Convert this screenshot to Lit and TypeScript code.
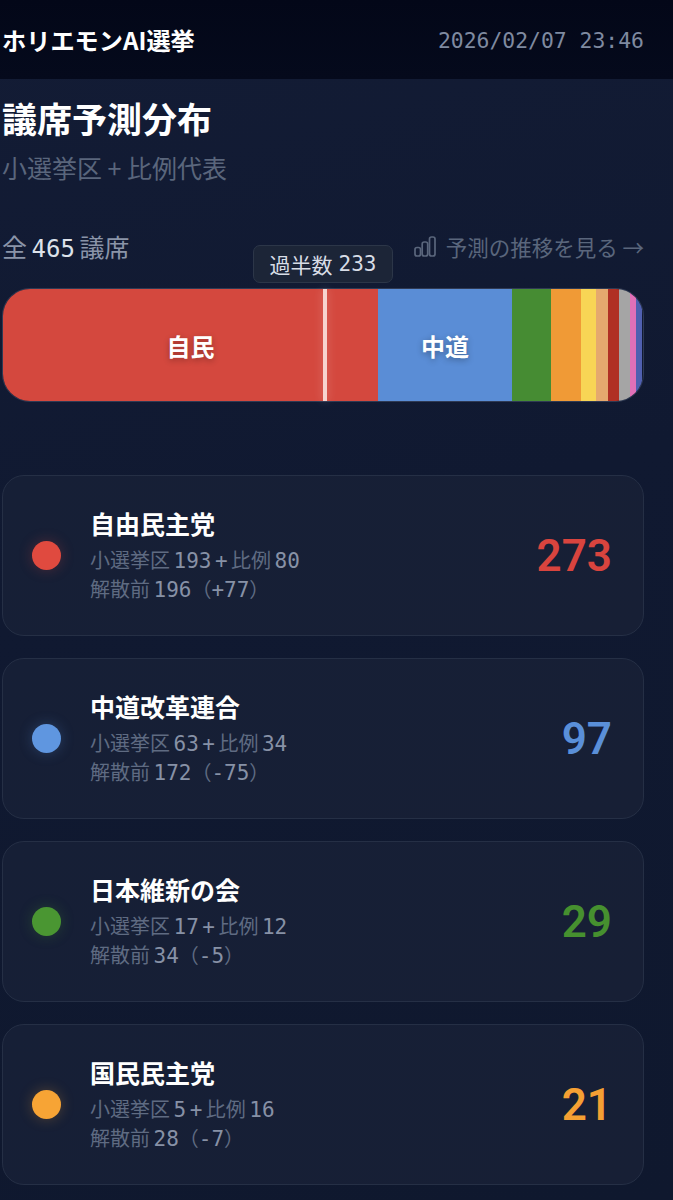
import { LitElement, html, css } from "lit";
import { customElement } from "lit/decorators.js";

const parties = [
  { n: "自由民主党", a: "小選挙区 193 + 比例 80", b: "解散前 196（+77）", v: 273, c: "#d9443e", dot: "#e04a3f" },
  { n: "中道改革連合", a: "小選挙区 63 + 比例 34", b: "解散前 172（-75）", v: 97, c: "#5a8fd8", dot: "#5f96e0" },
  { n: "日本維新の会", a: "小選挙区 17 + 比例 12", b: "解散前 34（-5）", v: 29, c: "#46902f", dot: "#4a9632" },
  { n: "国民民主党", a: "小選挙区 5 + 比例 16", b: "解散前 28（-7）", v: 21, c: "#f5a033", dot: "#f7a435" },
];
const segs = [
  { w: 375, c: "#d4483e", t: "自民" },
  { w: 134, c: "#5a8dd6", t: "中道" },
  { w: 39, c: "#468c33", t: "" },
  { w: 30, c: "#f09a36", t: "" },
  { w: 15, c: "#f8d555", t: "" },
  { w: 12, c: "#e5a96e", t: "" },
  { w: 11, c: "#b03024", t: "" },
  { w: 11, c: "#a5a5a5", t: "" },
  { w: 6, c: "#e070b8", t: "" },
  { w: 6, c: "#5060b0", t: "" },
];

const digits = (s: string) =>
  s.split(/([0-9+\-]+)/).map((p, i) => (i % 2 ? html`<span class="d">${p}</span>` : p));

@customElement("app-root")
export class AppRoot extends LitElement {
  static styles = css`
    :host { display: block; width: 673px; height: 1200px; overflow: hidden; background: linear-gradient(165deg, #131c35 0%, #101931 45%, #0f182e 100%); color: #fff; font-family: "Noto Sans CJK JP", "Noto Sans", sans-serif; }
    header { height: 79px; box-sizing: border-box; background: linear-gradient(180deg, #030718, #050a1c); display: flex; align-items: center; justify-content: space-between; padding: 0 29px 0 2px; }
    .logo { font-size: 24.2px; font-weight: 700; }
    .clock { font-family: "DejaVu Sans Mono", monospace; font-size: 21.4px; color: #7f8aa0; padding-top: 2px; }
    main { padding: 18px 29px 0 2px; }
    h1 { margin: 0; font-size: 35px; line-height: 42px; font-weight: 700; }
    .sub { font-size: 25px; line-height: 34px; color: #5a667c; margin-top: 11px; }
    .meta { display: flex; justify-content: space-between; align-items: center; margin-top: 44px; height: 36px; }
    .total { font-size: 25px; color: #8a94a8; word-spacing: -1px; }
    .total .d { font-family: "DejaVu Sans Mono", monospace; font-size: 24px; color: #dde2ea; }
    .trend { display: flex; align-items: center; gap: 10px; font-size: 21.5px; color: #5a667c; }
    .barwrap { position: relative; margin-top: 24px; }
    .majority { position: absolute; left: 251px; top: -43px; height: 38px; width: 140px; box-sizing: border-box; display: flex; align-items: center; justify-content: center; gap: 6px; background: #1c2537; border: 1px solid #2c3648; border-radius: 7px; font-size: 21px; color: #d8dde6; }
    .majority .d { font-family: "DejaVu Sans Mono", monospace; font-size: 21px; }
    .bar { display: flex; height: 114px; border-radius: 28px; overflow: hidden; border: 1px solid #2f3a54; box-sizing: border-box; }
    .seg { display: flex; align-items: center; justify-content: center; font-size: 24px; font-weight: 700; text-shadow: 0 2px 6px rgba(0,0,0,.3); flex: none; }
    .line { position: absolute; left: 321px; top: 1px; width: 4px; height: 112px; background: #f7d4d0; box-shadow: 0 0 10px rgba(255,255,255,.25); }
    .list { display: flex; flex-direction: column; gap: 22px; margin-top: 73px; }
    .card { height: 161px; box-sizing: border-box; background: linear-gradient(135deg, #161f36, #171f35); border: 1px solid #252f45; border-radius: 22px; display: flex; align-items: center; padding: 0 31px 0 29px; }
    .dot { width: 29px; height: 29px; border-radius: 50%; flex: none; margin-right: 29px; }
    .info { flex: 1; }
    .name { font-size: 25px; line-height: 34px; font-weight: 700; }
    .l { font-size: 20px; line-height: 29px; color: #5f6b82; word-spacing: -1px; }
    .l.first { margin-top: 7px; line-height: 26px; }
    .l .d { font-family: "DejaVu Sans Mono", monospace; font-size: 21px; color: #8791a6; }
    .num { font-size: 44px; font-weight: 600; font-family: Roboto, sans-serif; }
  `;
  render() {
    return html`
      <header><div class="logo">ホリエモンAI選挙</div><div class="clock">2026/02/07 23:46</div></header>
      <main>
        <h1>議席予測分布</h1>
        <div class="sub">小選挙区 + 比例代表</div>
        <div class="meta">
          <div class="total">全 <span class="d">465</span> 議席</div>
          <div class="trend">
            <svg width="22" height="21" viewBox="0 0 22 21" fill="none" stroke="#5a667c" stroke-width="1.7"><rect x="1" y="11.5" width="5.5" height="8.5" rx="2"/><rect x="8.2" y="6" width="5.5" height="14" rx="2"/><rect x="15.5" y="1" width="5.5" height="19" rx="2"/></svg>
            <span>予測の推移を見る →</span>
          </div>
        </div>
        <div class="barwrap">
          <div class="majority"><span>過半数</span><span class="d">233</span></div>
          <div class="bar">${segs.map((s) => html`<div class="seg" style="width:${s.w}px;background:${s.c}">${s.t}</div>`)}</div>
          <div class="line"></div>
        </div>
        <div class="list">
          ${parties.map((p) => html`
            <div class="card">
              <div class="dot" style="background:${p.dot};box-shadow:0 0 14px ${p.dot}44"></div>
              <div class="info"><div class="name">${p.n}</div><div class="l first">${digits(p.a)}</div><div class="l">${digits(p.b)}</div></div>
              <div class="num" style="color:${p.c}">${p.v}</div>
            </div>`)}
        </div>
      </main>`;
  }
}
